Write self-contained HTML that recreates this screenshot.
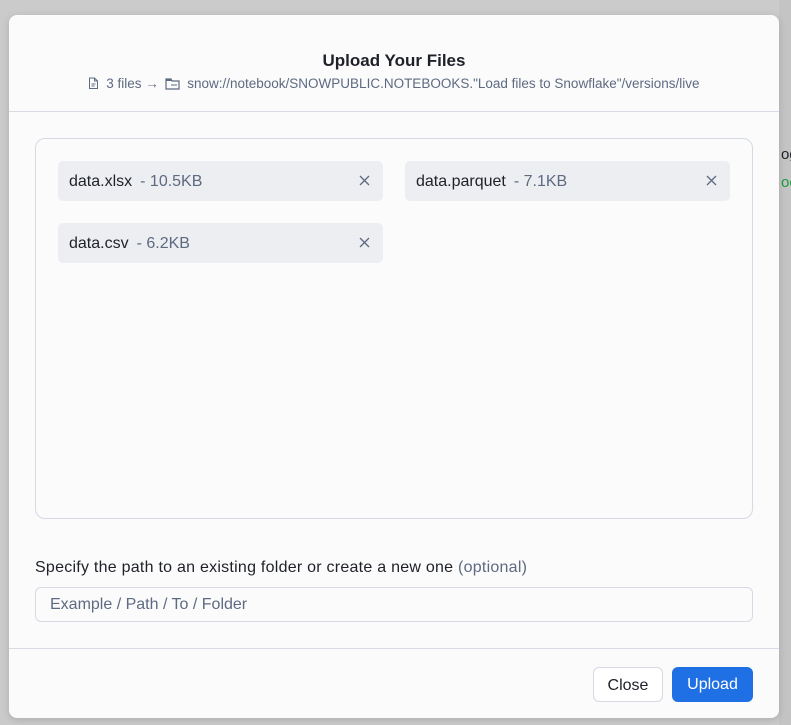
<!DOCTYPE html>
<html><head><meta charset="utf-8"><style>
*{box-sizing:border-box;margin:0;padding:0}
body{width:791px;height:725px;background:#cbcbcb;font-family:"Liberation Sans",sans-serif;position:relative;overflow:hidden}
.bg{position:absolute;left:779px;top:0;width:12px;height:725px;background:#c4c4c4}
.modal{position:absolute;left:9px;top:15px;width:770px;height:703px;background:#fbfbfc;border-radius:8px;box-shadow:0 2px 8px rgba(0,0,0,.15)}
.title{position:absolute;top:36px;width:100%;text-align:center;font-weight:bold;font-size:17px;color:#1e2128}
.sub{position:absolute;top:61px;width:100%;text-align:center;font-size:13.5px;color:#5d6a80;display:flex;justify-content:center;align-items:center;gap:3px}
.hr{position:absolute;left:0;width:100%;height:1px;background:#d8dbe6}
.drop{position:absolute;left:26px;top:123px;width:718px;height:381px;border:1px solid #d5d9e3;border-radius:10px}
.chip{position:absolute;width:325px;height:40px;background:#edeef2;border-radius:5px;font-size:16px;color:#1e2128;padding-left:11px;line-height:41px}
.chip span{color:#5d6a80;margin-left:8px}
.chip svg{position:absolute;right:13px;top:14px}
.lbl{position:absolute;left:26px;top:559px;font-size:16px;letter-spacing:.25px;color:#1e2128}
.lbl span{color:#5d6a80}
.inp{position:absolute;left:26px;top:572px;width:718px;height:35px;border:1px solid #d5d9e3;border-radius:6px;font-size:16px;color:#5d6a80;padding-left:14px;line-height:33px}
.btn{position:absolute;top:652px;height:35px;border-radius:6px;font-size:16px;line-height:35px;text-align:center}
</style></head><body>
<div class="bg"></div>
<div style="position:absolute;left:781px;top:146px;font-size:15px;color:#1e2128">og</div>
<div style="position:absolute;left:781px;top:174px;font-size:15px;color:#1a9b3c">oc</div>
<div class="modal">
<div class="title">Upload Your Files</div>
<div class="sub"><svg width="11" height="13" viewBox="0 0 11 13"><path d="M1.5 1h5l3 3v7.5h-8z M6.5 1v3h3 M3.5 7h4 M3.5 9h3" fill="none" stroke="#5d6a80" stroke-width="1"/></svg>&nbsp;3 files&nbsp;→&nbsp;<svg width="15" height="12" viewBox="0 0 15 12"><path d="M1 1h5l1 2h7v8H1z" fill="none" stroke="#5d6a80" stroke-width="1.2"/><path d="M1 1h5l1 2H1z" fill="#5d6a80"/><path d="M6 7h6" stroke="#5d6a80"/></svg>&nbsp;snow://notebook/SNOWPUBLIC.NOTEBOOKS."Load files to Snowflake"/versions/live</div>
<div class="hr" style="top:96px"></div>
<div class="drop"></div>
<div class="chip" style="left:49px;top:146px">data.xlsx<span>- 10.5KB</span><svg width="11" height="11" viewBox="0 0 11 11"><path d="M1 1l9 9M10 1l-9 9" stroke="#5d6a80" stroke-width="1.3"/></svg></div>
<div class="chip" style="left:396px;top:146px">data.parquet<span>- 7.1KB</span><svg width="11" height="11" viewBox="0 0 11 11"><path d="M1 1l9 9M10 1l-9 9" stroke="#5d6a80" stroke-width="1.3"/></svg></div>
<div class="chip" style="left:49px;top:208px">data.csv<span>- 6.2KB</span><svg width="11" height="11" viewBox="0 0 11 11"><path d="M1 1l9 9M10 1l-9 9" stroke="#5d6a80" stroke-width="1.3"/></svg></div>
<div class="lbl" style="top:544px">Specify the path to an existing folder or create a new one <span>(optional)</span></div>
<div class="inp">Example / Path / To / Folder</div>
<div class="hr" style="top:633px"></div>
<div class="btn" style="left:584px;width:70px;border:1px solid #d5d9e3;background:#fff;color:#1e2128">Close</div>
<div class="btn" style="left:663px;width:81px;background:#1f6fe5;color:#fff">Upload</div>
</div>
</body></html>
